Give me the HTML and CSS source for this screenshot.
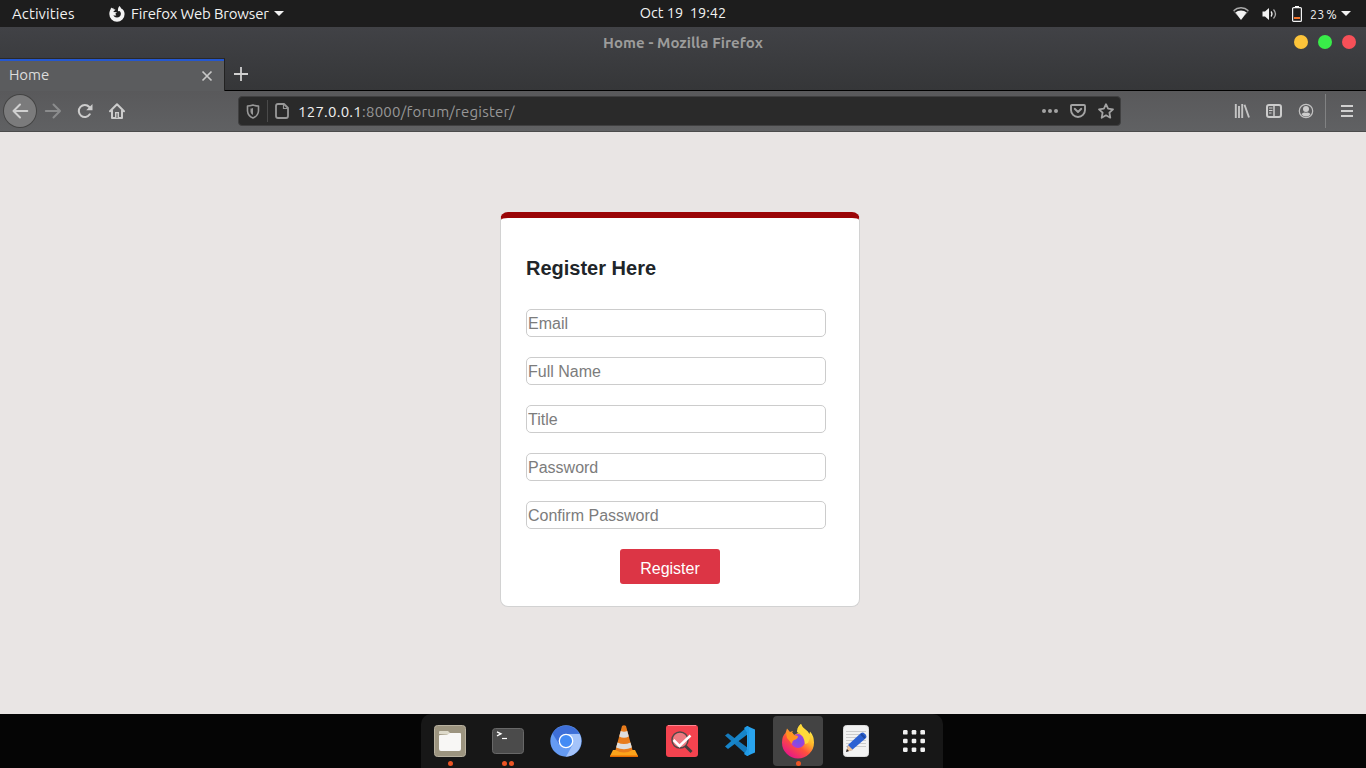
FILE: index.html
```html
<!DOCTYPE html>
<html lang="en">
<head>
<meta charset="utf-8">
<title>Home</title>
<link rel="stylesheet" href="styles.css">
</head>
<body>
<div class="desktop">
  <header class="topbar">
    <div class="top-left">
      <span class="activities">Activities</span>
      <svg class="app-icon" width="16" height="16" viewBox="0 0 16 16"><path fill="#f2f2f2" d="M10.5 0c1 1.1 1.5 1.8 1.7 2.5 1.9.7 3.4 2.9 3.4 5.6A7.6 7.6 0 0 1 8 15.8 7.7 7.7 0 0 1 .3 8.1C.3 6.200 1 4.400 1.700 3.100L2.100 1.500 3.200 2.600l1-.800.4 1.500 1.900.2-1.300 1.600C4.300 5.600 4 6.500 4 7.600c0 2.400 1.800 4 4 4s3.900-1.600 3.900-3.800c0-1.300-.7-2.300-1.500-2.800L9 5.200C8.700 3.200 9.300 1.300 10.500 0z"/><path fill="#f2f2f2" d="M4 6l4 .3-1.700 1.500 1 1.600H4z"/></svg>
      <span class="app-name">Firefox Web Browser</span>
      <i class="caret"></i>
    </div>
    <div class="clock">Oct 19&nbsp; 19:42</div>
    <div class="top-right">
      <svg width="16" height="14" viewBox="0 0 16 14"><path d="M.6 3.700a11 11 0 0 1 14.800 0" fill="none" stroke="#aaa" stroke-width="1.500"/><path d="M2.200 5.500a9 9 0 0 1 11.600 0L8 13z" fill="#f2f2f2"/><path d="M.4 3.500L4 8M15.600 3.500L12 8" stroke="#777" stroke-width=".8"/></svg>
      <svg class="speaker" width="16" height="14" viewBox="0 0 16 14"><path d="M.5 4.500H3L7 1v12L3 9.500H.5z" fill="#f2f2f2"/><path d="M9 4.500q2 2.500 0 5" fill="none" stroke="#eee" stroke-width="1.300"/><path d="M11.500 2.500q4 4.500 0 9" fill="none" stroke="#aaa" stroke-width="1.300"/></svg>
      <svg class="battery" width="10" height="16" viewBox="0 0 10 16"><path d="M3 0h4v2H3z" fill="#fff"/><rect x=".6" y="1.600" width="8.800" height="13.800" rx="1" fill="none" stroke="#f2f2f2" stroke-width="1.200"/><path d="M2 11h6v2H2z" fill="#f37329"/></svg>
      <span class="percent">23 %</span>
      <i class="caret"></i>
    </div>
  </header>

  <section class="frame">
    <div class="titlebar">
      <span class="window-title">Home - Mozilla Firefox</span>
      <div class="window-buttons"><i class="min"></i><i class="max"></i><i class="close"></i></div>
    </div>
    <div class="tabs">
      <div class="tab"><span>Home</span>
        <svg width="12" height="12" viewBox="0 0 12 12"><path d="M1.500 1.500l9 9m0-9l-9 9" stroke="#c8c8c8" stroke-width="1.700"/></svg>
      </div>
      <div class="tab-rest"><svg width="14" height="14" viewBox="0 0 14 14"><path d="M7 0v14M0 7h14" stroke="#d0d0d0" stroke-width="1.800"/></svg></div>
    </div>
  </section>

  <nav class="toolbar">
    <div class="nav-left">
      <span class="back"><svg width="16" height="16" viewBox="0 0 16 16"><path d="M15.300 8H1.500M8 1.500L1.500 8 8 14.500" fill="none" stroke="#d0d0d0" stroke-width="2" stroke-linecap="round" stroke-linejoin="round"/></svg></span>
      <svg class="forward" width="16" height="16" viewBox="0 0 16 16"><path d="M.8 8h14M8.500 1.500L15 8l-6.500 6.500" fill="none" stroke="#8b8c8d" stroke-width="2" stroke-linecap="round" stroke-linejoin="round"/></svg>
      <svg width="16" height="16" viewBox="0 0 16 16"><path d="M12.800 11.300A6 6 0 1 1 12.300 4" fill="none" stroke="#ccc" stroke-width="2" stroke-linecap="round"/><path d="M15.500 1v6.300H9.200z" fill="#ccc"/></svg>
      <svg width="16" height="16" viewBox="0 0 16 16"><path d="M1 8.300L8 1.200l7 7.100M3 7.500V15h10V7.500" fill="none" stroke="#ccc" stroke-width="2" stroke-linecap="round" stroke-linejoin="round"/><path d="M6 14.500V9h4v5.500" fill="#ccc"/><path d="M7.500 10.300h1V15h-1z" fill="#555"/></svg>
    </div>
    <div class="urlbar">
      <svg class="shield" width="14" height="15" viewBox="0 0 14 15"><path d="M7 1Q10 2 12.500 2v5q-.4 5-5.500 7-5.100-2-5.500-7V2Q4 2 7 1z" fill="none" stroke="#989898" stroke-width="1.600" stroke-linejoin="round"/><path d="M7 4q-1.300.5-2.500.5V8q.3 2 2.500 3z" fill="#989898"/></svg>
      <i class="url-separator"></i>
      <svg class="page-icon" width="14" height="16" viewBox="0 0 14 16"><path d="M3 1h6l4 4v8q0 2-2 2H3q-2 0-2-2V3q0-2 2-2z" fill="none" stroke="#989898" stroke-width="1.800" stroke-linejoin="round"/><path d="M8.500 1.500v4h4" fill="none" stroke="#989898" stroke-width="1.200"/></svg>
      <span class="url"><b>127.0.0.1</b>:8000/forum/register/</span>
      <svg class="dots" width="16" height="6" viewBox="0 0 16 6"><g fill="#a3a3a3"><circle cx="2" cy="3" r="2"/><circle cx="8" cy="3" r="2"/><circle cx="14" cy="3" r="2"/></g></svg>
      <svg class="pocket" width="16" height="14" viewBox="0 0 16 14"><path d="M2 1h12q1 0 1 1v4a7 7 0 0 1-14 0V2q0-1 1-1z" fill="none" stroke="#a3a3a3" stroke-width="1.900"/><path d="M4.700 4.800L8 8l3.300-3.200" fill="none" stroke="#a3a3a3" stroke-width="1.900" stroke-linecap="round" stroke-linejoin="round"/></svg>
      <svg class="star" width="16" height="16" viewBox="0 0 16 16"><path d="M8 1.200l2.100 4.500 4.900.6-3.600 3.400.9 5L8 12.300l-4.300 2.400.9-5L1 6.300l4.900-.6z" fill="none" stroke="#a3a3a3" stroke-width="1.800" stroke-linejoin="round"/></svg>
    </div>
    <div class="nav-right">
      <svg width="16" height="16" viewBox="0 0 16 16"><path d="M1.800 1v14M5 3v12M8.200 1v14M10.500 1.800L15 14.500" stroke="#c4c4c4" stroke-width="1.900" fill="none"/></svg>
      <svg width="16" height="14" viewBox="0 0 16 14"><rect x="1" y="1" width="14" height="12" rx="2" fill="none" stroke="#ccc" stroke-width="2"/><path d="M8 1v12" stroke="#ccc" stroke-width="1.500"/><path d="M3 4h3.500M3 6.500h3.500M3 9h2.500" stroke="#ccc"/></svg>
      <svg width="16" height="16" viewBox="0 0 16 16"><circle cx="8" cy="8" r="6.700" fill="none" stroke="#c2c2c2" stroke-width="1.200"/><circle cx="8" cy="6" r="3" fill="#ccc"/><path d="M3.500 11.200Q5 9 8 9.800q3-.8 4.500 1.400A5.500 5.500 0 0 1 3.500 11.200z" fill="#ccc"/></svg>
      <i class="toolbar-separator"></i>
      <svg class="menu" width="12" height="12" viewBox="0 0 12 12"><path d="M0 1h12M0 6h12M0 11h12" stroke="#d0d0d0" stroke-width="1.800"/></svg>
    </div>
  </nav>

  <main class="page">
    <form class="card">
      <h1>Register Here</h1>
      <input type="text" placeholder="Email">
      <input type="text" placeholder="Full Name">
      <input type="text" placeholder="Title">
      <input type="password" placeholder="Password">
      <input type="password" placeholder="Confirm Password">
      <button type="button">Register</button>
    </form>
  </main>

  <footer class="bottom">
    <div class="dock">
      <div class="launcher">
        <svg width="32" height="32" viewBox="0 0 32 32"><rect x=".5" y=".5" width="31" height="31" rx="3" fill="#9c947f" stroke="#b8b19f"/><path d="M5 9V7q0-1 1-1h8l2 2v2z" fill="#dedaca"/><path d="M5 11q0-1 1-1h7l3-2h10q1 0 1 1v15q0 2-2 2H7q-2 0-2-2z" fill="#f8f7f5"/></svg>
        <span class="running"><i></i></span>
      </div>
      <div class="launcher">
        <svg width="32" height="32" viewBox="0 0 32 32"><rect x=".5" y="3.500" width="31" height="25" rx="3" fill="#4b4b4b" stroke="#686868"/><path d="M5 4.800l4 2-4 2" fill="none" stroke="#fff" stroke-width="1.300" transform="translate(0 2)"/><path d="M10 13.500h5" stroke="#fff" stroke-width="1.200"/></svg>
        <span class="running"><i></i><i></i></span>
      </div>
      <div class="launcher">
        <svg width="32" height="32" viewBox="0 0 32 32"><circle cx="16" cy="16" r="15.700" fill="#659bf3"/><path d="M2.400 8.200A15.700 15.700 0 0 1 29.600 8.800L16 9 9 19z" fill="#3e6fd8"/><path d="M16 9h13.600A15.700 15.700 0 0 1 16 31.700L22.500 20z" fill="#a4c3fa"/><circle cx="16" cy="16" r="6.700" fill="#438bf5" stroke="#fff" stroke-width="1.300"/></svg>
      </div>
      <div class="launcher">
        <svg width="32" height="32" viewBox="0 0 32 32"><path d="M5 25h22l3 6H2z" fill="#fba31b"/><path d="M2 30.500h28V32H2z" fill="#e56a00"/><path d="M14 1q2-1.500 4 0l6.500 24q-8.500 5-17 0z" fill="#e87c1c"/><path d="M12.700 6q3.300 1.500 6.600 0l1.500 5.500q-4.800 2.500-9.600 0zM9.500 17.500q6.500 3 13 0l1.400 5q-7.900 3.500-15.800 0z" fill="#dedede"/></svg>
      </div>
      <div class="launcher">
        <svg width="32" height="32" viewBox="0 0 32 32"><rect width="32" height="32" rx="3" fill="#f4434f"/><path d="M2 .5h28" stroke="#ff8490"/><circle cx="14" cy="15" r="8" fill="#ee7980" stroke="#514848" stroke-width="1.500"/><path d="M7.500 15l6 6L24.500 10.500" fill="none" stroke="#fff" stroke-width="2.500"/><path d="M19.500 21l6 6" stroke="#443d3d" stroke-width="2.800"/></svg>
      </div>
      <div class="launcher">
        <svg width="32" height="32" viewBox="0 0 32 32"><path d="M1 10.500L4 8.200 24 23v8z" fill="#167bbd"/><path d="M1 21.500l3 2.500L24 9V1z" fill="#1685ca"/><path d="M23 1l8 3.500v23L23 31z" fill="#29a3ed"/><path d="M23 1l-3 2 4 6v14l-4 6 3 2 2-1V2z" fill="#209be7"/></svg>
      </div>
      <div class="launcher active">
        <svg width="34" height="34" viewBox="0 0 34 34">
          <defs><linearGradient id="flame" x1=".85" y1=".1" x2=".25" y2=".95"><stop stop-color="#fff34a"/><stop offset=".35" stop-color="#ffb52a"/><stop offset=".62" stop-color="#ff513c"/><stop offset="1" stop-color="#e71787"/></linearGradient><radialGradient id="globe"><stop stop-color="#6b55e8"/><stop offset="1" stop-color="#a43fd8"/></radialGradient></defs>
          <path d="M20 0q1 4 6 7l2.500 3L29 7.500q4 4.500 4 11A16 16 0 0 1 1 18.500Q1 12 4.500 9L6 4.500 9 8l3-1 2 3 2-3q1-5 4-7z" fill="url(#flame)"/><path d="M11 8l2 3 4-2 3 1V5h-5z" fill="#434343"/><circle cx="17" cy="17" r="7" fill="url(#globe)"/><path d="M5 8q6 0 8 3l4 1q0 3-4 4-2 1-2 4l-5-6z" fill="#ff9420"/><path d="M20 0q-4 3-4 8 7 3 8 12l3-1q5-8-3-14-3-2-4-5z" fill="#ffd93a"/>
        </svg>
        <span class="running"><i></i></span>
      </div>
      <div class="launcher">
        <svg width="32" height="32" viewBox="0 0 32 32"><rect x="3.500" y=".5" width="25" height="31" rx="3" fill="#f2f2f2" stroke="#ddd"/><path d="M6 6.500h20M6 9.500h20M6 12.500h20M6 15.500h20M6 18.500h20M6 21.500h20" stroke="#ccc"/><path d="M6 27l2-7 13-12q2-1 3 0l2 2q1 2 0 3L12 25z" fill="#2d62d3"/><path d="M21 9l4 4" stroke="#2149a0" stroke-width="2"/><path d="M6 27l2-7 5 5z" fill="#efc49b"/><path d="M6 27l1-3 2 2z" fill="#222"/></svg>
      </div>
      <div class="launcher">
        <svg width="22" height="22" viewBox="0 0 22 22"><g fill="#f0f0f0"><rect width="4.600" height="4.600" rx="1.200"/><rect x="8.700" width="4.600" height="4.600" rx="1.200"/><rect x="17.400" width="4.600" height="4.600" rx="1.200"/><rect y="8.700" width="4.600" height="4.600" rx="1.200"/><rect x="8.700" y="8.700" width="4.600" height="4.600" rx="1.200"/><rect x="17.400" y="8.700" width="4.600" height="4.600" rx="1.200"/><rect y="17.400" width="4.600" height="4.600" rx="1.200"/><rect x="8.700" y="17.400" width="4.600" height="4.600" rx="1.200"/><rect x="17.400" y="17.400" width="4.600" height="4.600" rx="1.200"/></g></svg>
      </div>
    </div>
  </footer>
</div>
</body>
</html>
```
FILE: styles.css
```css
* { box-sizing: border-box; }
body { margin: 0; overflow: hidden; font: 15px/20px Ubuntu, "Noto Sans", sans-serif; }
svg { display: block; flex: none; overflow: visible; }
.desktop { width: 1366px; height: 768px; display: grid; grid-template-rows: 27px 64px 41px 582px 54px; }
.topbar { background: #1d1d1d; color: #f2f2f2; display: grid; grid-template-columns: 1fr auto 1fr; align-items: center; }
.top-left, .top-right { display: flex; align-items: center; }
.top-left { padding-left: 12px; }
.activities { width: 97px; letter-spacing: .1px; }
.app-name { width: 138px; margin-left: 6px; white-space: nowrap; letter-spacing: -.17px; }
.clock { font-size: 14.5px; padding-bottom: 1px; }
.caret { border: 5px solid transparent; border-top-color: #f2f2f2; border-bottom: 0; margin-left: 5px; }
.top-right { justify-content: flex-end; padding-right: 15px; }
.speaker { margin-left: 13px; }
.battery { margin-left: 14px; }
.percent { font-size: 12.5px; letter-spacing: .1px; word-spacing: -1px; width: 27px; margin-left: 8px; white-space: nowrap; }
.top-right .caret { margin-left: 4px; }
.frame { background: linear-gradient(#414246, #353638); display: grid; grid-template-rows: 31px 33px; }
.titlebar { display: grid; grid-template-columns: 1fr auto 1fr; align-items: center; }
.window-title { grid-column: 2; color: #9c9c9b; font-weight: bold; letter-spacing: .06px; }
.window-buttons { display: flex; justify-content: flex-end; gap: 10px; padding: 0 10px 1px 0; }
.window-buttons i { width: 14px; height: 14px; border-radius: 50%; }
.min { background: #fcc43a; }
.max { background: #39ed49; }
.close { background: #f65058; }
.tabs { display: flex; }
.tab { width: 225px; display: flex; align-items: center; justify-content: space-between; background: #5b5c5e; color: #ddd; border-top: 1px solid #292929; border-right: 1px solid #222; box-shadow: inset 0 2px #2457cf; padding: 1px 11px 0 9px; }
.tab span { padding-bottom: 2px; letter-spacing: -.1px; }
.tab-rest { flex: 1; border-bottom: 1px solid #000; padding: 9px; }
.toolbar { background: linear-gradient(#59595b, #606163); border-bottom: 1px solid #4b4b4b; display: flex; align-items: center; }
.nav-left { width: 238px; display: flex; align-items: center; gap: 16px; padding-left: 4px; }
.back { width: 32px; height: 32px; border-radius: 50%; background: #7b7b7c; box-shadow: 0 0 0 1px #444; display: grid; place-items: center; }
.forward { margin-left: -7px; }
.urlbar { width: 883px; height: 30px; background: #2a2a2a; border: 1px solid #404041; border-radius: 4px; display: flex; align-items: center; padding: 0 6px 0 7px; }
.url-separator { width: 1px; height: 22px; background: #4a4a4a; margin: 0 7px; }
.url { flex: 1; color: #979797; margin-left: 9px; padding-top: 1px; letter-spacing: .24px; }
.url b { color: #f0f0f0; font-weight: normal; }
.pocket { margin-left: 12px; }
.star { margin-left: 12px; }
.nav-right { margin-left: auto; padding-right: 13px; display: flex; align-items: center; gap: 16px; }
.toolbar-separator { width: 1px; height: 34px; background: #818283; margin: 0 -1px 0 -5px; }
.page { background: #e9e5e4; padding: 80px 0 0 500px; }
.card { width: 360px; height: 395px; background: #fff; border: 1px solid #d2d2d2; border-top: 6px solid #9b0507; border-radius: 8px; padding: 35px 25px 0; display: flex; flex-direction: column; font: 16px/24px "Liberation Sans", sans-serif; }
.card h1 { margin: 0 0 26px; color: #212529; font-size: 20px; line-height: 30px; }
.card input { width: 300px; height: 28px; margin: 0 0 20px; padding: 3px 1px 1px; border: 1px solid #ccc; border-radius: 5px; font: inherit; }
.card input::placeholder { color: #7c7c7c; }
.card button { width: 100px; height: 35px; margin-left: 94px; padding: 4px 0 0; border: 0; border-radius: 3px; background: #dc3545; color: #fff; font: inherit; }
.bottom { background: #050505; display: flex; justify-content: center; padding-right: 2px; }
.dock { display: flex; background: #171717; border-radius: 10px 10px 0 0; }
.launcher { width: 58px; height: 54px; display: grid; place-items: center; position: relative; }
.active { width: 50px; height: 50px; margin: 2px 4px; background: #434343; border-radius: 4px; }
.running { position: absolute; bottom: 2px; left: 0; right: 0; display: flex; justify-content: center; gap: 2px; }
.active .running { bottom: 0; }
.running i { width: 5px; height: 5px; border-radius: 50%; background: #ec5424; }
```
